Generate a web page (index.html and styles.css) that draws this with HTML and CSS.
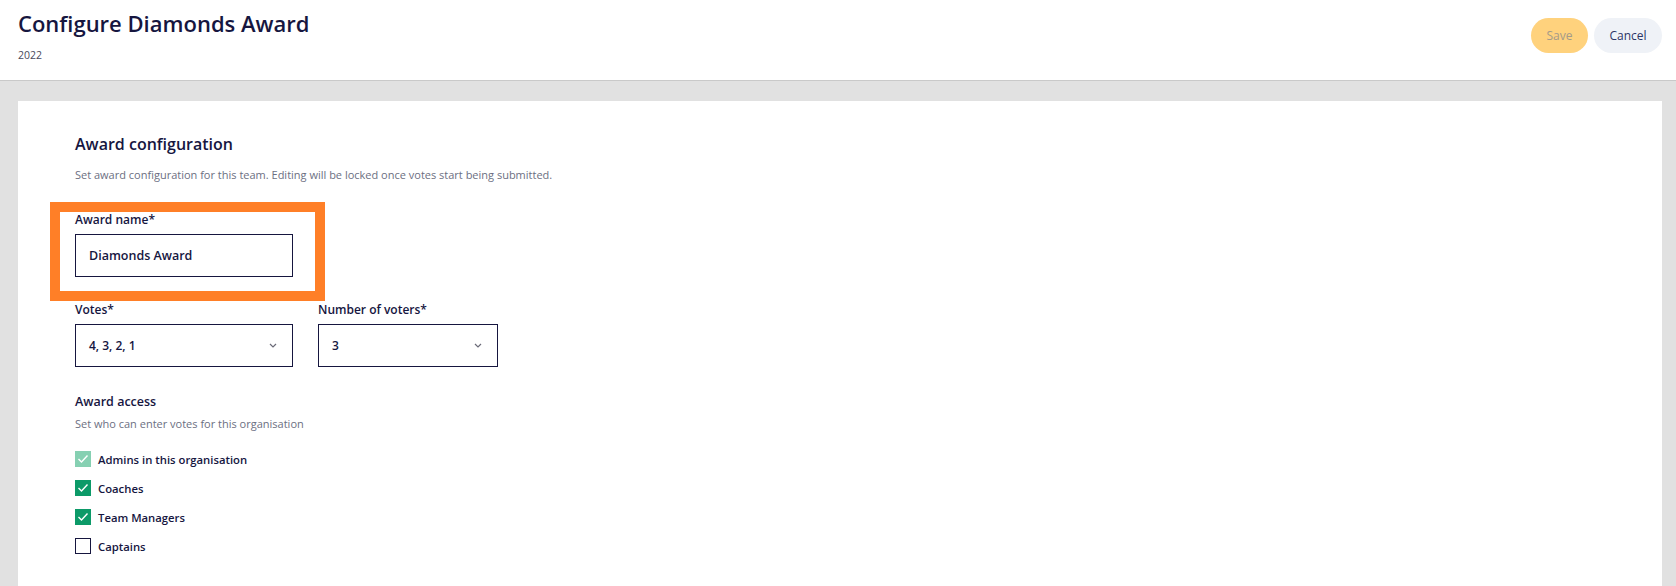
FILE: index.html
```html
<!DOCTYPE html>
<html>
  <head>
    <meta charset="UTF-8">
    <meta name="viewport" content="width=device-width, initial-scale=1.0">
    <title>Configure Diamonds Award</title>
    <link rel="stylesheet" href="styles.css">
  </head>
  <body>
    <header class="page-header">
      <div class="title-block">
        <h1>Configure Diamonds Award</h1>
        <span class="season">2022</span>
      </div>
      <div class="actions">
        <button class="btn btn-save" type="button" disabled>Save</button>
        <button class="btn btn-cancel" type="button">Cancel</button>
      </div>
    </header>

    <main class="page-body">
      <section class="card">
        <h2>Award configuration</h2>
        <p class="hint">Set award configuration for this team. Editing will be locked once votes start being submitted.</p>

        <div class="highlight">
          <div class="field">
            <label for="awardName">Award name*</label>
            <div class="control">Diamonds Award</div>
          </div>
        </div>

        <div class="field-row">
          <div class="field">
            <label>Votes*</label>
            <div class="control select votes">
              <span>4, 3, 2, 1</span>
              <svg width="8" height="5" viewBox="0 0 8 5"><path d="M1 1l3 3 3-3" fill="none" stroke="#6b6b78" stroke-width="1.2"/></svg>
            </div>
          </div>
          <div class="field">
            <label>Number of voters*</label>
            <div class="control select voters">
              <span>3</span>
              <svg width="8" height="5" viewBox="0 0 8 5"><path d="M1 1l3 3 3-3" fill="none" stroke="#6b6b78" stroke-width="1.2"/></svg>
            </div>
          </div>
        </div>

        <h3>Award access</h3>
        <p class="hint small">Set who can enter votes for this organisation</p>

        <ul class="checks">
          <li><span class="box checked disabled"><svg width="12" height="10" viewBox="0 0 12 10"><path d="M1.5 5l3 3 6-6.5" fill="none" stroke="#fff" stroke-width="1.4"/></svg></span>Admins in this organisation</li>
          <li><span class="box checked"><svg width="12" height="10" viewBox="0 0 12 10"><path d="M1.5 5l3 3 6-6.5" fill="none" stroke="#fff" stroke-width="1.4"/></svg></span>Coaches</li>
          <li><span class="box checked"><svg width="12" height="10" viewBox="0 0 12 10"><path d="M1.5 5l3 3 6-6.5" fill="none" stroke="#fff" stroke-width="1.4"/></svg></span>Team Managers</li>
          <li><span class="box"></span>Captains</li>
        </ul>
      </section>
    </main>
  </body>
</html>
```

FILE: styles.css
```css
body {
  font-family: 'Open Sans', sans-serif;
  margin: 0;
  padding: 0;
  background-color: #e1e1e1;
  color: #16163f;
  height: 586px;
  overflow: hidden;
}

.page-header {
  background-color: #fff;
  height: 80px;
  border-bottom: 1px solid #c9c9c9;
  display: flex;
  justify-content: space-between;
  align-items: flex-start;
  padding: 0 14px 0 18px;
}

.title-block h1 {
  font-size: 22px;
  font-weight: 600;
  margin: 10px 0 0 0;
  line-height: 26px;
}

.season {
  display: block;
  font-size: 10.5px;
  color: #4a4a5a;
  margin-top: 12px;
}

.actions {
  display: flex;
  gap: 6px;
  margin-top: 18px;
}

.btn {
  height: 35px;
  border: none;
  border-radius: 18px;
  font-family: inherit;
  font-size: 12px;
  padding: 0;
}

.btn-save {
  width: 57px;
  background-color: #ffd27d;
  color: #a39a8a;
}

.btn-cancel {
  width: 68px;
  background-color: #eff2f7;
  color: #2c3566;
  cursor: pointer;
}

.page-body {
  padding: 20px 14px 0 18px;
}

.card {
  background-color: #fff;
  padding: 33px 0 40px 57px;
  min-height: 500px;
}

.card h2 {
  font-size: 16px;
  font-weight: 600;
  margin: 0;
  line-height: 20px;
}

.hint {
  font-size: 11px;
  color: #6c6f82;
  margin: 14px 0 0 0;
  line-height: 14px;
}

.highlight {
  width: 240px;
  margin: 20px 0 0 -25px;
  border: 10px solid #ff7f27;
  padding: 0 0 14px 15px;
}

.field {
  display: flex;
  flex-direction: column;
}

.field label {
  font-size: 12px;
  font-weight: 600;
  line-height: 16px;
  margin-bottom: 6px;
}

.control {
  box-sizing: border-box;
  width: 218px;
  height: 43px;
  border: 1px solid #16163f;
  padding: 0 13px;
  display: flex;
  align-items: center;
  font-size: 12.5px;
  font-weight: 600;
}

.select {
  justify-content: space-between;
  font-size: 12px;
}

.select svg {
  margin-right: 2px;
}

.control.voters {
  width: 180px;
}

.field-row {
  display: flex;
  gap: 25px;
  margin-top: 1px;
}

.card h3 {
  font-size: 12.5px;
  font-weight: 600;
  margin: 27px 0 0 0;
  line-height: 16px;
}

.hint.small {
  margin-top: 7px;
}

.checks {
  list-style: none;
  margin: 20px 0 0 0;
  padding: 0;
  display: flex;
  flex-direction: column;
  gap: 13px;
}

.checks li {
  display: flex;
  align-items: center;
  gap: 7px;
  font-size: 11.3px;
  font-weight: 600;
  height: 16px;
}

.box {
  box-sizing: border-box;
  width: 16px;
  height: 16px;
  border: 1px solid #16163f;
  display: flex;
  align-items: center;
  justify-content: center;
}

.box.checked {
  border: none;
  background-color: #0c9a68;
}

.box.disabled {
  background-color: #86d0b2;
}
```
